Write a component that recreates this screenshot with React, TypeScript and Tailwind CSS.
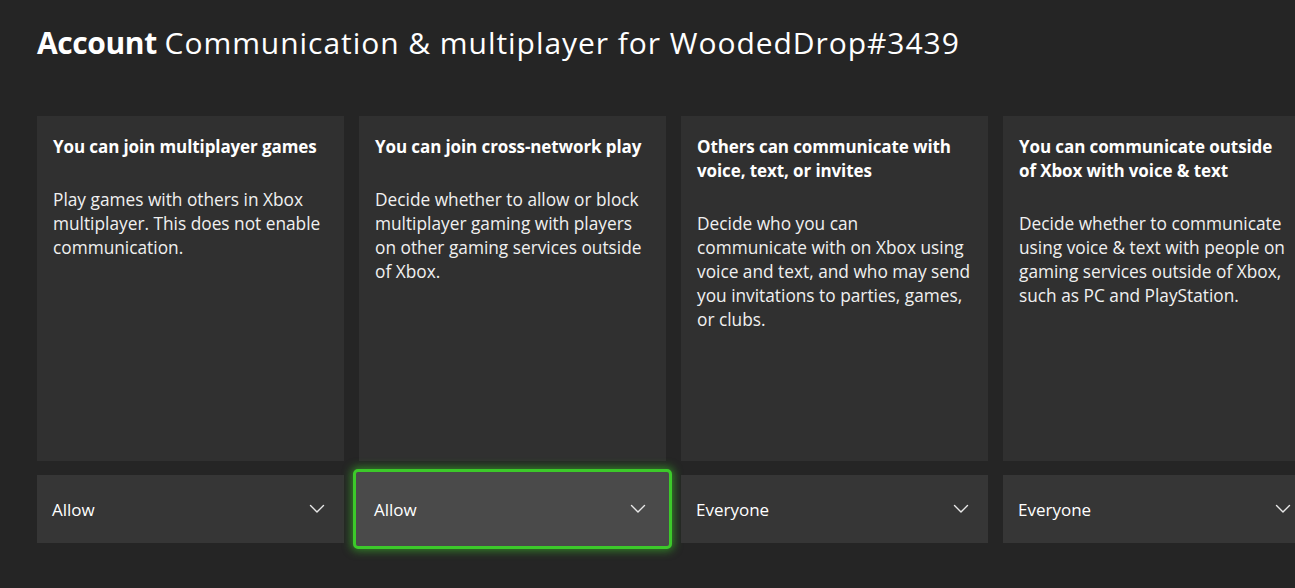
import { ReactNode } from 'react'

type Setting = {
  title: ReactNode
  body: string
  value: string
  focused?: boolean
}

const settings: Setting[] = [
  {
    title: 'You can join multiplayer games',
    body: 'Play games with others in Xbox multiplayer. This does not enable communication.',
    value: 'Allow',
  },
  {
    title: 'You can join cross-network play',
    body: 'Decide whether to allow or block multiplayer gaming with players on other gaming services outside of Xbox.',
    value: 'Allow',
    focused: true,
  },
  {
    title: 'Others can communicate with voice, text, or invites',
    body: 'Decide who you can communicate with on Xbox using voice and text, and who may send you invitations to parties, games, or clubs.',
    value: 'Everyone',
  },
  {
    title: 'You can communicate outside of Xbox with voice & text',
    body: 'Decide whether to communicate using voice & text with people on gaming services outside of Xbox, such as PC and PlayStation.',
    value: 'Everyone',
  },
]

function Chevron() {
  return (
    <svg width="16" height="10" viewBox="0 0 16 10" fill="none">
      <path d="M1.5 1.5 L8 8 L14.5 1.5" stroke="#e8e8e8" strokeWidth="1.4" strokeLinecap="round" strokeLinejoin="round" />
    </svg>
  )
}

function SettingColumn({ s }: { s: Setting }) {
  return (
    <div className="w-[307px] flex-shrink-0 flex flex-col">
      <div className="h-[345px] bg-[#303030] pl-4 pr-[14px] pt-[19px] text-white">
        <h3 className="pr-[8px] text-[17px] leading-6 font-bold tracking-[-0.1px]">{s.title}</h3>
        <p className="mt-[29px] pr-[2px] text-[17.3px] leading-6 text-[#f0f0f0]">{s.body}</p>
      </div>
      <div className="mt-[14px] h-[68px] relative">
        {s.focused ? (
          <div className="absolute -inset-[6px] rounded-[5px] border-[3px] border-[#3cc92a] bg-[#4a4a4a] shadow-[0_0_8px_2px_rgba(60,201,42,0.55)] flex items-center justify-between pl-[18px] pr-[23px]">
            <span className="pt-[2px] text-[17px] text-white">{s.value}</span>
            <Chevron />
          </div>
        ) : (
          <div className="h-full bg-[#363636] flex items-center justify-between pl-[15px] pr-[19px]">
            <span className="pt-[2px] text-[17px] text-white">{s.value}</span>
            <Chevron />
          </div>
        )}
      </div>
    </div>
  )
}

export default function App() {
  return (
    <div
      className="w-[1295px] h-[588px] overflow-hidden bg-[#252525] text-white"
      style={{ fontFamily: '"Open Sans", "Noto Sans", sans-serif' }}
    >
      <header className="pl-[37px] pt-[22px] h-[116px]">
        <h1 className="text-[30px] leading-[42px] whitespace-nowrap">
          <span className="font-bold tracking-[-0.4px]">Account</span>{' '}
          <span className="tracking-[0.95px]">Communication &amp; multiplayer for WoodedDrop#3439</span>
        </h1>
      </header>
      <div className="flex gap-[15px] pl-[37px]">
        {settings.map((s, i) => (
          <SettingColumn key={i} s={s} />
        ))}
      </div>
    </div>
  )
}
